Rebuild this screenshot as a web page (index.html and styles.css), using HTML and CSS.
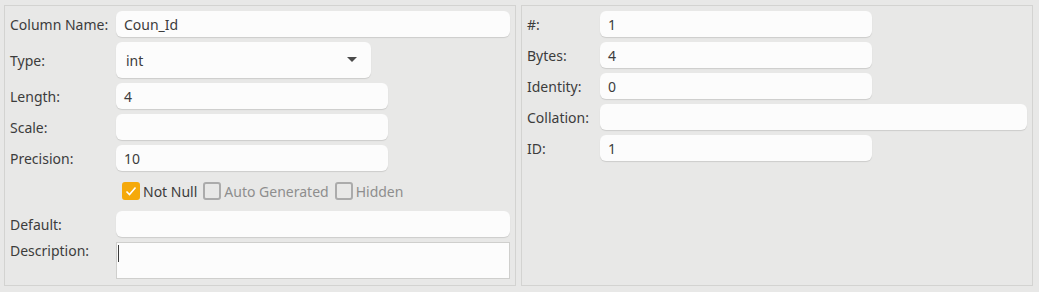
FILE: index.html
```html
<!DOCTYPE html>
<html lang="en">

<head>
    <meta charset="UTF-8">
    <title>Column Properties</title>
    <link rel="stylesheet" href="styles.css">
</head>

<body>
    <div class="panels">
        <div class="panel left">
            <label>Column Name:</label>
            <div class="field wide">Coun_Id</div>

            <label>Type:</label>
            <div class="combo">
                <span>int</span>
                <svg width="10" height="6" viewBox="0 0 10 6"><path d="M0 0 L10 0 L5 5 Z" fill="#4a4a4a"/></svg>
            </div>

            <label>Length:</label>
            <div class="field">4</div>

            <label>Scale:</label>
            <div class="field"></div>

            <label>Precision:</label>
            <div class="field">10</div>

            <span></span>
            <div class="checks">
                <span class="check on">
                    <span class="box"><svg width="14" height="14" viewBox="0 0 14 14"><path d="M2.5 7.5 L5.5 10.5 L11.5 3.5" fill="none" stroke="#fff" stroke-width="1.6"/></svg></span>
                    Not Null
                </span>
                <span class="check"><span class="box"></span>Auto Generated</span>
                <span class="check"><span class="box"></span>Hidden</span>
            </div>

            <label>Default:</label>
            <div class="field wide"></div>

            <label class="top">Description:</label>
            <div class="area"><span class="caret"></span></div>
        </div>

        <div class="panel right">
            <label>#:</label>
            <div class="field">1</div>

            <label>Bytes:</label>
            <div class="field">4</div>

            <label>Identity:</label>
            <div class="field">0</div>

            <label>Collation:</label>
            <div class="field wide"></div>

            <label>ID:</label>
            <div class="field">1</div>
        </div>
    </div>
</body>

</html>
```

FILE: styles.css
```css
body {
    margin: 0;
    padding: 5px 6px 6px 4px;
    background: #e8e8e7;
    font-family: "Noto Sans", "DejaVu Sans", sans-serif;
    font-size: 14px;
    color: #3c3c3c;
}

.panels {
    display: flex;
    gap: 5px;
    height: 281px;
}

.panel {
    flex: 1;
    box-sizing: border-box;
    border: 1px solid #d3d3d1;
    padding: 5px 5px 0 5px;
    display: grid;
    row-gap: 5px;
    align-content: start;
    align-items: center;
}

.left {
    grid-template-columns: 106px 1fr;
    grid-template-rows: 26px 36px 26px 26px 26px 30px 26px 37px;
}

.right {
    grid-template-columns: 73px 1fr;
    grid-template-rows: repeat(5, 26px);
}

label {
    white-space: nowrap;
}

label.top {
    align-self: start;
    line-height: 17px;
}

.field,
.combo {
    box-sizing: border-box;
    height: 26px;
    width: 272px;
    background: #fcfcfc;
    border-radius: 6px;
    box-shadow: 0 1px 1px rgba(0, 0, 0, .12);
    padding: 0 8px;
    display: flex;
    align-items: center;
}

.field.wide {
    width: 100%;
}

.combo {
    height: 36px;
    width: 255px;
    padding: 0 14px 0 10px;
    justify-content: space-between;
}

.area {
    box-sizing: border-box;
    height: 37px;
    background: #fcfcfc;
    border: 1px solid #cfcfcd;
    padding: 2px 0 0 1px;
}

.caret {
    display: block;
    width: 1px;
    height: 17px;
    background: #3c3c3c;
}

.checks {
    display: flex;
    align-items: center;
    gap: 6px;
    padding-left: 6px;
}

.check {
    display: flex;
    align-items: center;
    gap: 3px;
    color: #8e8e8e;
}

.check.on {
    color: #3c3c3c;
}

.box {
    box-sizing: border-box;
    width: 18px;
    height: 18px;
    border: 2px solid #ababab;
    border-radius: 3px;
    display: flex;
    align-items: center;
    justify-content: center;
}

.check.on .box {
    background: #f5a90a;
    border-color: #f5a90a;
}
```
